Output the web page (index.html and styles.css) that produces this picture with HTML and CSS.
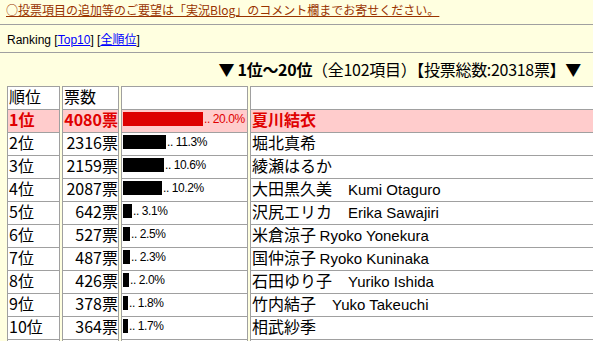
FILE: index.html
```html
<!DOCTYPE html>
<html lang="ja">
<head>
<meta charset="utf-8">
<title>Ranking</title>
<link rel="stylesheet" href="styles.css">
</head>
<body>
<p class="notice"><a href="#" class="notice-link">○投票項目の追加等のご要望は「実況Blog」のコメント欄までお寄せください。</a></p>
<hr class="rule">
<p class="nav">Ranking [<a href="#">Top10</a>] [<a href="#">全順位</a>]</p>
<hr class="rule">
<h2 class="range"><b>▼ 1位～20位</b>（全102項目）【投票総数:20318票】<b>▼</b></h2>
<table class="rank">
  <colgroup>
    <col class="c-pos"><col class="c-votes"><col class="c-bar"><col class="c-name">
  </colgroup>
  <tr class="head"><td>順位</td><td>票数</td><td></td><td></td></tr>
  <tr class="top"><td>1位</td><td class="num">4080票</td><td class="bar"><span class="fill" style="width:80px"></span><span class="pct">.. 20.0%</span></td><td>夏川結衣</td></tr>
  <tr><td>2位</td><td class="num">2316票</td><td class="bar"><span class="fill" style="width:43px"></span><span class="pct">.. 11.3%</span></td><td>堀北真希</td></tr>
  <tr><td>3位</td><td class="num">2159票</td><td class="bar"><span class="fill" style="width:41px"></span><span class="pct">.. 10.6%</span></td><td>綾瀬はるか</td></tr>
  <tr><td>4位</td><td class="num">2087票</td><td class="bar"><span class="fill" style="width:39px"></span><span class="pct">.. 10.2%</span></td><td>大田黒久美　<span class="en">Kumi Otaguro</span></td></tr>
  <tr><td>5位</td><td class="num">642票</td><td class="bar"><span class="fill" style="width:9px"></span><span class="pct">.. 3.1%</span></td><td>沢尻エリカ　<span class="en">Erika Sawajiri</span></td></tr>
  <tr><td>6位</td><td class="num">527票</td><td class="bar"><span class="fill" style="width:7px"></span><span class="pct">.. 2.5%</span></td><td>米倉涼子 <span class="en">Ryoko Yonekura</span></td></tr>
  <tr><td>7位</td><td class="num">487票</td><td class="bar"><span class="fill" style="width:7px"></span><span class="pct">.. 2.3%</span></td><td>国仲涼子 <span class="en">Ryoko Kuninaka</span></td></tr>
  <tr><td>8位</td><td class="num">426票</td><td class="bar"><span class="fill" style="width:6px"></span><span class="pct">.. 2.0%</span></td><td>石田ゆり子　<span class="en">Yuriko Ishida</span></td></tr>
  <tr><td>9位</td><td class="num">378票</td><td class="bar"><span class="fill" style="width:5px"></span><span class="pct">.. 1.8%</span></td><td>竹内結子　<span class="en">Yuko Takeuchi</span></td></tr>
  <tr><td>10位</td><td class="num">364票</td><td class="bar"><span class="fill" style="width:5px"></span><span class="pct">.. 1.7%</span></td><td>相武紗季</td></tr>
  <tr class="edge"><td></td><td></td><td></td><td></td></tr>
</table>
</body>
</html>
```

FILE: styles.css
```css
html {
  overflow: hidden;
  background: #ffffe0;
}
body {
  margin: 0;
  padding: 0 0 0 7px;
  background: #ffffe0;
  color: #000;
  font-family: "Noto Sans CJK JP", "Liberation Sans", sans-serif;
  font-size: 12px;
}
.notice {
  margin: 0 0 0 -1px;
  padding-top: 2px;
  line-height: 15px;
}
.notice-link {
  color: #993300;
  text-decoration: underline;
}
.rule {
  border: 0;
  border-top: 1px solid #a0a0a0;
  height: 0;
  margin: 7px 0 0 -7px;
}
.nav {
  margin: 8px 0 0;
  line-height: 15px;
  font-family: "Liberation Sans", "Noto Sans CJK JP", sans-serif;
}
.nav a {
  color: #0000ff;
}
.nav + .rule {
  margin-top: 4px;
}
.range {
  margin: 7px 0 0;
  padding-right: 12px;
  text-align: right;
  font-size: 16px;
  line-height: 19px;
  font-weight: normal;
  letter-spacing: -0.3px;
}
.range b {
  font-weight: bold;
}
.rank {
  margin-top: 7px;
  border-collapse: separate;
  border-spacing: 0;
  table-layout: fixed;
  width: 600px;
  font-size: 16px;
}
.c-pos { width: 55px; }
.c-votes { width: 59px; }
.c-bar { width: 129px; }
.rank td {
  height: 23px;
  padding: 0 1px 2px 2px;
  box-sizing: border-box;
  background: #fff;
  background-clip: padding-box;
  border-right: 2px solid transparent;
  box-shadow: inset 1px 1px #a0a0a0, inset -1px 0 #a0a0a0;
  line-height: 19px;
  vertical-align: middle;
  white-space: nowrap;
}
.rank tr.edge td {
  height: 3px;
  padding: 0;
}
.rank tr.top td {
  background: #ffcccc;
  background-clip: padding-box;
  color: #e00000;
  font-weight: bold;
}
.rank td.num {
  text-align: right;
}
.rank td.bar {
  font-size: 0;
}
.fill {
  display: inline-block;
  height: 14px;
  background: #000;
  vertical-align: middle;
}
.top .fill {
  background: #dd0000;
}
.pct {
  display: inline-block;
  vertical-align: middle;
  margin-left: 1px;
  font-family: "Liberation Sans", sans-serif;
  font-size: 12px;
  letter-spacing: -0.4px;
  font-weight: normal;
  line-height: 14px;
}
.en {
  font-family: "Liberation Sans", sans-serif;
  font-size: 15px;
}
```
